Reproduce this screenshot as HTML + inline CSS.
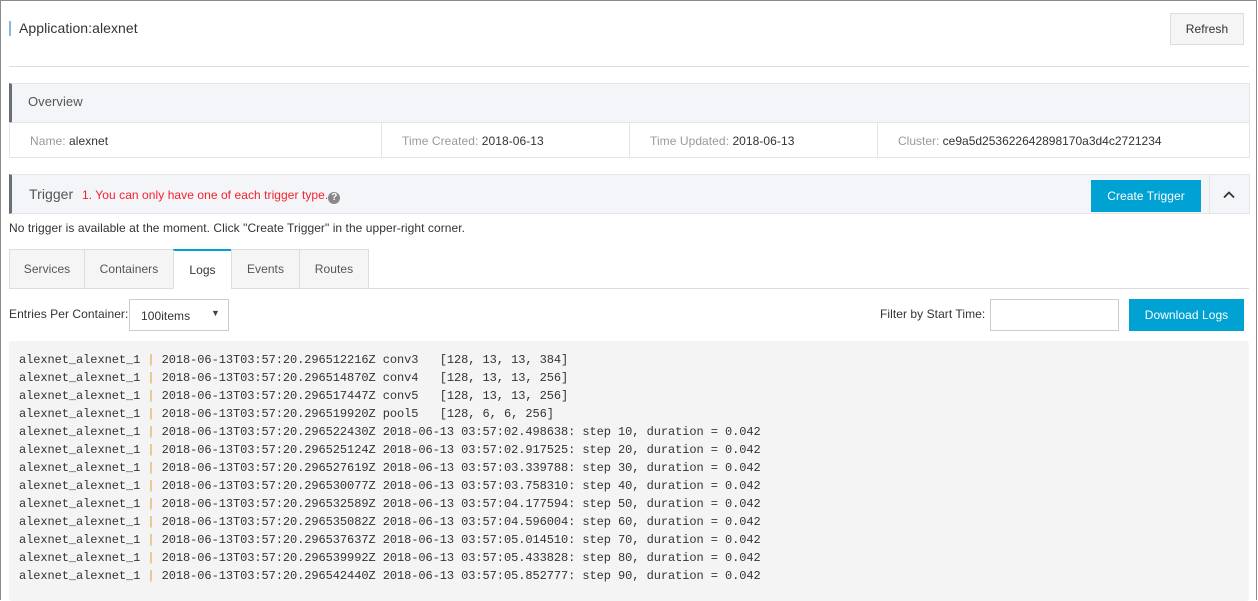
<!DOCTYPE html>
<html><head><style>
*{box-sizing:border-box;margin:0;padding:0}
body{width:1258px;height:586px;overflow:hidden;background:#fff;font-family:"Liberation Sans",sans-serif;font-size:12px;color:#333;position:relative;letter-spacing:0.06px}
.frame{position:absolute;left:0;top:0;width:1257px;height:600px;border:1px solid #8a8a8a;border-bottom:none}
.abs{position:absolute}
.btn{position:absolute;background:#00a2d4;color:#fff;font-size:12px;display:flex;align-items:center;justify-content:center}
.log{position:absolute;left:9px;top:341px;width:1240px;height:260px;background:#f4f4f4;border-radius:3px;font-family:"Liberation Mono",monospace;font-size:12px;letter-spacing:-0.07px;color:#333;padding:10px 0 0 10px;line-height:18px;white-space:pre}
.bar{color:#e09a2a}
.tab{position:absolute;top:249px;height:40px;border:1px solid #ddd;background:#f5f5f5;display:flex;align-items:center;justify-content:center;color:#555}
</style></head><body>
<div class="frame"></div>
<div class="abs" style="left:9px;top:21px;width:2px;height:15px;background:#88b7e0"></div>
<div class="abs" style="left:19px;top:20px;font-size:14px;color:#333">Application:alexnet</div>
<div class="abs" style="left:1170px;top:13px;width:74px;height:32px;border:1px solid #ddd;background:#f5f5f5;display:flex;align-items:center;justify-content:center;color:#333">Refresh</div>
<div class="abs" style="left:9px;top:66px;width:1240px;height:1px;background:#ddd"></div>

<div class="abs" style="left:9px;top:83px;width:1241px;height:40px;background:#f4f5f8;border:1px solid #e3e5ea;border-left:3px solid #6a6e78"></div>
<div class="abs" style="left:28px;top:94px;font-size:13px;color:#555">Overview</div>
<div class="abs" style="left:9px;top:122px;width:1241px;height:36px;border:1px solid #e5e5e5;border-top:none"></div>
<div class="abs" style="left:381px;top:122px;width:1px;height:35px;background:#e5e5e5"></div>
<div class="abs" style="left:629px;top:122px;width:1px;height:35px;background:#e5e5e5"></div>
<div class="abs" style="left:877px;top:122px;width:1px;height:35px;background:#e5e5e5"></div>
<div class="abs" style="left:30px;top:134px"><span style="color:#999">Name:</span> alexnet</div>
<div class="abs" style="left:402px;top:134px"><span style="color:#999">Time Created:</span> 2018-06-13</div>
<div class="abs" style="left:650px;top:134px"><span style="color:#999">Time Updated:</span> 2018-06-13</div>
<div class="abs" style="left:898px;top:134px;letter-spacing:0"><span style="color:#999">Cluster:</span> ce9a5d253622642898170a3d4c2721234</div>

<div class="abs" style="left:9px;top:174px;width:1241px;height:40px;background:#f4f5f8;border:1px solid #e3e5ea;border-left:3px solid #6a6e78"></div>
<div class="abs" style="left:29px;top:186px;font-size:14px;color:#555">Trigger</div>
<div class="abs" style="left:82px;top:188px;color:#f5222d">1. You can only have one of each trigger type.<span style="display:inline-block;width:12px;height:12px;border-radius:50%;background:#888;color:#fff;font-size:10px;text-align:center;line-height:12px;vertical-align:-1px;font-weight:bold">?</span></div>
<div class="btn" style="left:1091px;top:180px;width:110px;height:32px">Create Trigger</div>
<div class="abs" style="left:1209px;top:175px;width:1px;height:38px;background:#e3e5ea"></div>
<svg class="abs" style="left:1223px;top:191px" width="12" height="8"><path d="M1 6.5L6 1.5L11 6.5" stroke="#333" stroke-width="1.8" fill="none"/></svg>
<div class="abs" style="left:9px;top:221px;color:#333">No trigger is available at the moment. Click "Create Trigger" in the upper-right corner.</div>

<div class="abs" style="left:9px;top:288px;width:1240px;height:1px;background:#ddd"></div>
<div class="tab" style="left:9px;width:76px">Services</div>
<div class="tab" style="left:84px;width:90px">Containers</div>
<div class="tab" style="left:173px;width:59px;background:#fff;border-top:2px solid #00a2d4;border-bottom-color:#fff;color:#333">Logs</div>
<div class="tab" style="left:231px;width:69px">Events</div>
<div class="tab" style="left:299px;width:70px">Routes</div>

<div class="abs" style="left:9px;top:307px">Entries Per Container:</div>
<div class="abs" style="left:129px;top:299px;width:100px;height:32px;border:1px solid #ccc;padding:9px 0 0 11px">100items<span style="position:absolute;right:8px;top:8px;font-size:9px;color:#444">▼</span></div>
<div class="abs" style="left:880px;top:307px">Filter by Start Time:</div>
<div class="abs" style="left:990px;top:299px;width:129px;height:32px;border:1px solid #ccc"></div>
<div class="btn" style="left:1129px;top:299px;width:115px;height:32px">Download Logs</div>

<div class="log">alexnet_alexnet_1 <span class="bar">|</span> 2018-06-13T03:57:20.296512216Z conv3   [128, 13, 13, 384]
alexnet_alexnet_1 <span class="bar">|</span> 2018-06-13T03:57:20.296514870Z conv4   [128, 13, 13, 256]
alexnet_alexnet_1 <span class="bar">|</span> 2018-06-13T03:57:20.296517447Z conv5   [128, 13, 13, 256]
alexnet_alexnet_1 <span class="bar">|</span> 2018-06-13T03:57:20.296519920Z pool5   [128, 6, 6, 256]
alexnet_alexnet_1 <span class="bar">|</span> 2018-06-13T03:57:20.296522430Z 2018-06-13 03:57:02.498638: step 10, duration = 0.042
alexnet_alexnet_1 <span class="bar">|</span> 2018-06-13T03:57:20.296525124Z 2018-06-13 03:57:02.917525: step 20, duration = 0.042
alexnet_alexnet_1 <span class="bar">|</span> 2018-06-13T03:57:20.296527619Z 2018-06-13 03:57:03.339788: step 30, duration = 0.042
alexnet_alexnet_1 <span class="bar">|</span> 2018-06-13T03:57:20.296530077Z 2018-06-13 03:57:03.758310: step 40, duration = 0.042
alexnet_alexnet_1 <span class="bar">|</span> 2018-06-13T03:57:20.296532589Z 2018-06-13 03:57:04.177594: step 50, duration = 0.042
alexnet_alexnet_1 <span class="bar">|</span> 2018-06-13T03:57:20.296535082Z 2018-06-13 03:57:04.596004: step 60, duration = 0.042
alexnet_alexnet_1 <span class="bar">|</span> 2018-06-13T03:57:20.296537637Z 2018-06-13 03:57:05.014510: step 70, duration = 0.042
alexnet_alexnet_1 <span class="bar">|</span> 2018-06-13T03:57:20.296539992Z 2018-06-13 03:57:05.433828: step 80, duration = 0.042
alexnet_alexnet_1 <span class="bar">|</span> 2018-06-13T03:57:20.296542440Z 2018-06-13 03:57:05.852777: step 90, duration = 0.042</div>
</body></html>
